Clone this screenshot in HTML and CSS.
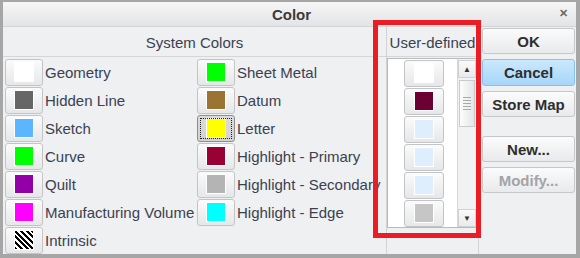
FILE: index.html
```html
<!DOCTYPE html>
<html lang="en">
<head>
    <meta charset="UTF-8">
    <title>Color</title>
    <link rel="stylesheet" href="styles.css">
</head>
<body>
    <div class="dialog">
        <div class="titlebar">
            <span class="title">Color</span>
            <span class="close">&#x2715;</span>
        </div>

        <div class="content">
            <section class="system">
                <div class="section-head">System Colors</div>
                <div class="system-grid">
                    <div class="item"><button class="swatch-btn"><span class="swatch" style="background:#ffffff"></span></button><span class="label">Geometry</span></div>
                    <div class="item"><button class="swatch-btn"><span class="swatch" style="background:#666666"></span></button><span class="label">Hidden Line</span></div>
                    <div class="item"><button class="swatch-btn"><span class="swatch" style="background:#5cb5ff"></span></button><span class="label">Sketch</span></div>
                    <div class="item"><button class="swatch-btn"><span class="swatch" style="background:#00ff00"></span></button><span class="label">Curve</span></div>
                    <div class="item"><button class="swatch-btn"><span class="swatch" style="background:#9400a8"></span></button><span class="label">Quilt</span></div>
                    <div class="item"><button class="swatch-btn"><span class="swatch" style="background:#ff00ff"></span></button><span class="label">Manufacturing Volume</span></div>
                    <div class="item"><button class="swatch-btn"><span class="swatch striped"></span></button><span class="label">Intrinsic</span></div>
                    <div class="item"><button class="swatch-btn"><span class="swatch" style="background:#00ff00"></span></button><span class="label">Sheet Metal</span></div>
                    <div class="item"><button class="swatch-btn"><span class="swatch" style="background:#9b7332"></span></button><span class="label">Datum</span></div>
                    <div class="item"><button class="swatch-btn pressed"><span class="swatch" style="background:#ffff00"></span></button><span class="label">Letter</span></div>
                    <div class="item"><button class="swatch-btn"><span class="swatch" style="background:#990033"></span></button><span class="label">Highlight - Primary</span></div>
                    <div class="item"><button class="swatch-btn"><span class="swatch" style="background:#b4b4b4"></span></button><span class="label">Highlight - Secondary</span></div>
                    <div class="item"><button class="swatch-btn"><span class="swatch" style="background:#00ffff"></span></button><span class="label">Highlight - Edge</span></div>
                </div>
            </section>

            <section class="user">
                <div class="section-head">User-defined</div>
                <div class="user-list">
                    <div class="user-swatches">
                        <button class="swatch-btn wide"><span class="swatch" style="background:#ffffff"></span></button>
                        <button class="swatch-btn wide"><span class="swatch" style="background:#6b0033"></span></button>
                        <button class="swatch-btn wide"><span class="swatch" style="background:#deeefc"></span></button>
                        <button class="swatch-btn wide"><span class="swatch" style="background:#deeefc"></span></button>
                        <button class="swatch-btn wide"><span class="swatch" style="background:#deeefc"></span></button>
                        <button class="swatch-btn wide"><span class="swatch" style="background:#c6c6c6"></span></button>
                    </div>
                    <div class="scrollbar">
                        <div class="arrow">&#9650;</div>
                        <div class="thumb">
                            <span></span><span></span><span></span><span></span><span></span>
                        </div>
                        <div class="track"></div>
                        <div class="arrow">&#9660;</div>
                    </div>
                </div>
            </section>

            <div class="actions">
                <button class="action">OK</button>
                <button class="action primary">Cancel</button>
                <button class="action">Store Map</button>
                <button class="action spaced">New...</button>
                <button class="action disabled">Modify...</button>
            </div>
        </div>

        <!-- annotation box drawn over the user-defined column -->
        <div class="highlight-box"></div>
    </div>
</body>
</html>
```

FILE: styles.css
```css
body {
    margin: 0;
    padding: 0;
    font-family: "Liberation Sans", Arial, sans-serif;
    background-color: #ffffff;
}
.dialog {
    position: relative;
    width: 580px;
    height: 258px;
    box-sizing: border-box;
    border-style: solid;
    border-color: #a6a6a6;
    border-width: 2px 4px 4px 3px;
    background-color: #eef0f2;
    color: #3b4150;
    display: flex;
    flex-direction: column;
}
.titlebar {
    height: 25px;
    flex: none;
    display: flex;
    align-items: center;
    justify-content: center;
    position: relative;
    background: linear-gradient(#f6f6f6, #e3e4e6);
    border-bottom: 1px solid #d2d3d5;
    box-sizing: border-box;
}
.title {
    font-weight: bold;
    font-size: 15px;
    color: #3a3a3a;
    margin-left: 4px;
}
.close {
    position: absolute;
    right: 8px;
    top: 5px;
    font-size: 11px;
    font-weight: bold;
    color: #6a6a6a;
}
.content {
    flex: 1;
    display: flex;
    min-height: 0;
}
.section-head {
    height: 30px;
    box-sizing: border-box;
    border-bottom: 1px solid #d5d6d8;
    display: flex;
    align-items: center;
    justify-content: center;
    font-size: 15px;
    padding-top: 2px;
}
.system {
    width: 383px;
    flex: none;
}
.system-grid {
    display: grid;
    grid-template-columns: 192px 1fr;
    grid-template-rows: repeat(7, 28px);
    grid-auto-flow: column;
    padding: 2px 0 0 2px;
}
.item {
    display: flex;
    align-items: flex-start;
    white-space: nowrap;
}
.label {
    font-size: 15px;
    line-height: 27px;
    margin-left: 2px;
}
.swatch-btn {
    flex: none;
    width: 38px;
    height: 27px;
    box-sizing: border-box;
    padding: 0;
    border: 1px solid #c3c4c6;
    border-radius: 3px;
    background: linear-gradient(#fbfbfb, #e6e7e9);
    display: flex;
    justify-content: center;
    align-items: flex-start;
    padding-top: 2px;
    position: relative;
    z-index: 1;
}
.swatch-btn.wide {
    width: 40px;
}
.swatch-btn.pressed {
    background: linear-gradient(#dcdcdc, #d2d2d2);
    border-color: #8e8e8e;
}
.swatch-btn.pressed::after {
    content: "";
    position: absolute;
    left: 2px;
    top: 2px;
    right: 2px;
    bottom: 2px;
    border: 1px dotted #222222;
}
.swatch {
    display: block;
    width: 20px;
    height: 20px;
    box-sizing: border-box;
    border: 1px solid #ffffff;
}
.swatch.striped {
    background: repeating-linear-gradient(45deg, #000000 0 2px, #ffffff 2px 4px);
}
.user {
    width: 92px;
    flex: none;
    box-sizing: border-box;
    border-left: 1px solid #d2d3d5;
}
.user-list {
    margin-top: 1px;
    width: 90px;
    height: 170px;
    box-sizing: border-box;
    border: 1px solid #b9babc;
    background-color: #ffffff;
    display: flex;
}
.user-swatches {
    flex: 1;
    display: flex;
    flex-direction: column;
    align-items: center;
    gap: 1px;
    padding-top: 1px;
    padding-left: 2px;
}
.scrollbar {
    width: 18px;
    flex: none;
    display: flex;
    flex-direction: column;
    background-color: #f1f2f3;
    border-left: 1px solid #d6d7d9;
    padding-top: 1px;
}
.arrow {
    height: 18px;
    font-size: 8px;
    color: #333333;
    display: flex;
    align-items: center;
    justify-content: center;
    background: linear-gradient(#fafafa, #e9eaec);
    border: 1px solid #d0d1d3;
    box-sizing: border-box;
}
.thumb {
    height: 47px;
    margin: 2px 1px 0 1px;
    box-sizing: border-box;
    border: 1px solid #c9cacc;
    background: linear-gradient(90deg, #fdfdfd, #e4e5e7);
    display: flex;
    flex-direction: column;
    align-items: center;
    justify-content: center;
    gap: 2px;
}
.thumb span {
    display: block;
    width: 8px;
    height: 1px;
    background-color: #a9aaac;
}
.track {
    flex: 1;
}
.actions {
    flex: 1;
    box-sizing: border-box;
    border-left: 1px solid #d2d3d5;
    display: flex;
    flex-direction: column;
    gap: 5px;
    padding: 1px 0 0 3px;
}
.action {
    width: 93px;
    height: 26px;
    box-sizing: border-box;
    border: 1px solid #c6c7c9;
    border-radius: 3px;
    background: linear-gradient(#fbfbfb, #e9eaec);
    font-family: "Liberation Sans", Arial, sans-serif;
    font-size: 15px;
    font-weight: bold;
    color: #2e2e2e;
    padding: 0;
}
.action.primary {
    background: linear-gradient(#cbe8fd, #a6d6f8);
    border-color: #86c3ec;
    height: 27px;
}
.action.spaced {
    margin-top: 14px;
}
.action.disabled {
    color: #a3a4a6;
}
.highlight-box {
    position: absolute;
    left: 370px;
    top: 18px;
    width: 108px;
    height: 218px;
    box-sizing: border-box;
    border: 5px solid #ea1c24;
    pointer-events: none;
}
```
